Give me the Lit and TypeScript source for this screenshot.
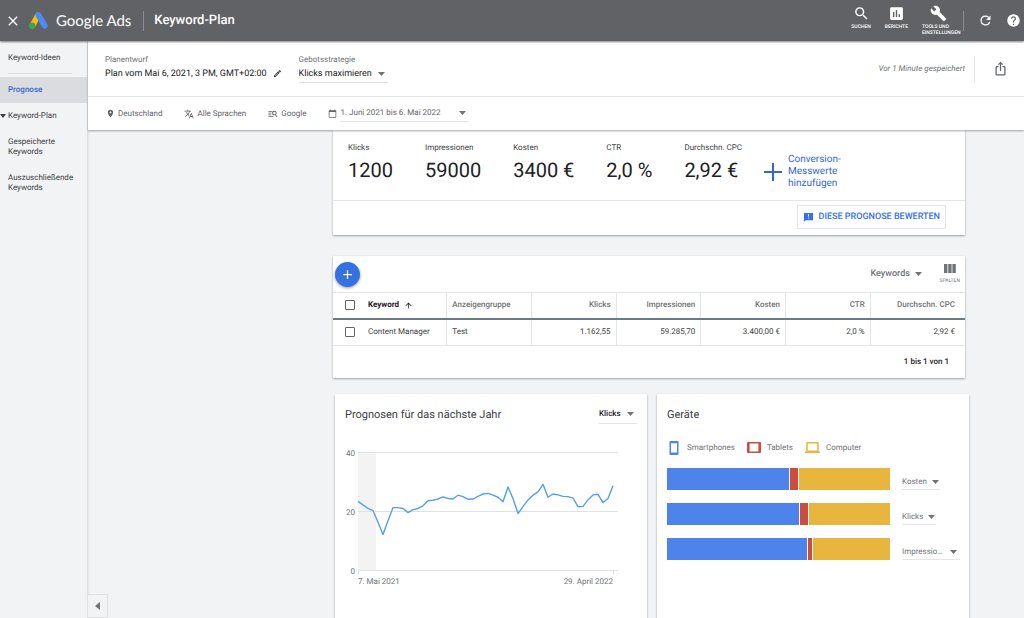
import { LitElement, html, css, svg } from "lit";
import { customElement, property } from "lit/decorators.js";

const shared = css`
  *, *::before, *::after { box-sizing: border-box; }
  button, select, input { font: inherit; color: inherit; margin: 0; text-rendering: inherit; }
  button { background: none; border: 0; padding: 0; cursor: pointer; }
  a { color: inherit; text-decoration: none; }
  svg { display: block; flex: none; }
`;

const icon = (size: number, d: string) => html`
  <svg width=${size} height=${size} viewBox="0 0 24 24" fill="currentColor" aria-hidden="true"><path d=${d}></path></svg>
`;

const paths = {
  close: "M19 6.4L17.6 5 12 10.6 6.4 5 5 6.4 10.6 12 5 17.6 6.4 19 12 13.4 17.6 19 19 17.6 13.4 12z",
  search: "M15.5 14h-.79l-.28-.27A6.47 6.47 0 0 0 16 9.5 6.5 6.5 0 1 0 9.5 16c1.61 0 3.09-.59 4.23-1.57l.27.28v.79l5 4.99L20.49 19l-4.99-5zm-6 0C7.01 14 5 11.99 5 9.5S7.01 5 9.5 5 14 7.01 14 9.5 11.99 14 9.5 14z",
  reports: "M19 3H5a2 2 0 0 0-2 2v14a2 2 0 0 0 2 2h14a2 2 0 0 0 2-2V5a2 2 0 0 0-2-2zM9 17H7v-7h2v7zm4 0h-2V7h2v10zm4 0h-2v-4h2v4z",
  wrench: "M22.700 19l-9.100-9.100c.9-2.300.4-5-1.500-6.900-2-2-5-2.400-7.400-1.300L9 6 6 9 1.600 4.700C.4 7.100.9 10.100 2.900 12.100c1.900 1.900 4.600 2.400 6.900 1.500l9.100 9.100c.4.4 1 .4 1.400 0l2.300-2.300c.5-.4.5-1.100.1-1.400z",
  refresh: "M17.650 6.350A7.958 7.958 0 0 0 12 4a8 8 0 1 0 7.730 10h-2.080A6 6 0 1 1 12 6c1.660 0 3.140.69 4.220 1.780L13 11h7V4l-2.350 2.350z",
  help: "M12 2a10 10 0 1 0 0 20 10 10 0 0 0 0-20zm1 17h-2v-2h2v2zm2.070-7.750l-.9.920C13.450 12.900 13 13.500 13 15h-2v-.5c0-1.100.45-2.100 1.170-2.830l1.240-1.260c.37-.36.59-.86.59-1.410a2 2 0 1 0-4 0H8a4 4 0 1 1 8 0c0 .88-.36 1.680-.93 2.250z",
  pencil: "M14.060 9.020l.92.920L5.920 19H5v-.92l9.060-9.060M17.660 3c-.25 0-.51.100-.7.290l-1.830 1.830 3.750 3.750 1.830-1.830a1 1 0 0 0 0-1.410l-2.340-2.340c-.2-.2-.45-.29-.71-.29zm-3.600 3.190L3 17.250V21h3.750L17.810 9.940l-3.750-3.750z",
  pin: "M12 2a7 7 0 0 0-7 7c0 5.250 7 13 7 13s7-7.750 7-13a7 7 0 0 0-7-7zm0 9.500a2.500 2.500 0 1 1 0-5 2.500 2.500 0 0 1 0 5z",
  translate: "M12.870 15.070l-2.540-2.510.03-.03A17.520 17.520 0 0 0 14.070 6H17V4h-7V2H8v2H1v1.990h11.170C11.500 7.920 10.440 9.750 9 11.350 8.070 10.320 7.300 9.190 6.690 8h-2c.73 1.630 1.730 3.170 2.980 4.560l-5.090 5.020L4 19l5-5 3.110 3.110.76-2.040zM18.500 10h-2L12 22h2l1.120-3h4.750L21 22h2l-4.500-12zm-2.620 7l1.620-4.330L19.120 17h-3.240z",
  network: "M1 5h9v1.800H1zM1 9h7v1.800H1zM1 13h7v1.800H1zM1 17h12v1.800H1zM15.500 4.500a5.200 5.200 0 0 1 3.600 9l4 5.500h-2.500l-3.400-4.500A5.200 5.200 0 1 1 15.500 4.500zm0 2a3.200 3.200 0 1 0 0 6.400 3.200 3.200 0 0 0 0-6.400z",
  calendar: "M20 3h-1V1h-2v2H7V1H5v2H4c-1.100 0-2 .9-2 2v16c0 1.100.9 2 2 2h16c1.100 0 2-.9 2-2V5c0-1.100-.9-2-2-2zm0 18H4V8h16v13z",
  share: "M16 5l-1.420 1.420-1.590-1.590V16h-1.980V4.830L9.420 6.420 8 5l4-4 4 4zm4 5v11a2 2 0 0 1-2 2H6a2 2 0 0 1-2-2V10a2 2 0 0 1 2-2h3v2H6v11h12V10h-3V8h3a2 2 0 0 1 2 2z",
  feedback: "M22 2H2v20l4-4h16V2zm-9 12h-2v-2h2v2zm0-4h-2V5h2v5z",
  arrowUp: "M4 12l1.410 1.410L11 7.830V20h2V7.830l5.580 5.590L20 12l-8-8-8 8z",
  add: "M19 13h-6v6h-2v-6H5v-2h6V5h2v6h6v2z",
};

@customElement("drop-down")
class DropDown extends LitElement {
  @property() label = "";
  @property({ attribute: false }) options: string[] = [];

  static styles = [shared, css`
    :host { display: block; }
    .box { display: flex; align-items: center; position: relative; }
    select {
      appearance: none; width: 100%; min-width: 0; border: 0; border-radius: 0; background: none;
      padding: 0 var(--arrow-space, 14px) 0 0; line-height: inherit; outline: none; cursor: pointer;
      overflow: hidden; text-overflow: ellipsis; white-space: nowrap;
    }
    svg { position: absolute; right: var(--arrow-inset, 3px); pointer-events: none; color: #6f7377; }
  `];

  render() {
    return html`
      <label class="box">
        <select aria-label=${this.label}>${this.options.map(o => html`<option>${o}</option>`)}</select>
        <svg width="7" height="4" viewBox="0 0 7 4" fill="currentColor" aria-hidden="true"><path d="M0 0h7L3.500 4z"></path></svg>
      </label>`;
  }
}

@customElement("forecast-chart")
class ForecastChart extends LitElement {
  static styles = [shared, css`
    :host { display: block; }
    .plot { width: 100%; height: auto; overflow: visible; }
    .tick { font: 8px Roboto, sans-serif; fill: #6f7377; }
    .start { text-anchor: start; }
    .end { text-anchor: end; }
  `];

  private values = [
    23.6, 22.4, 21.2, 20.5, 16.5, 12.4, 17, 21.5, 21.5, 21.2, 19.8, 20.8, 21.2,
    22.1, 23.8, 24, 24.4, 25.1, 24.6, 24.4, 25.7, 25.2, 24.3, 24.4, 25.3, 26.1,
    26.3, 25.7, 25, 23.5, 28.5, 24.6, 19.5, 21.8, 24.1, 25.7, 26.8, 29.4, 25,
    26.1, 25.8, 25.3, 25.2, 24.7, 21.8, 21.9, 24.1, 25.8, 26, 23.2, 24.6, 28.9,
  ];

  render() {
    const y = (v: number) => 126 - v * 2.95;
    const points = this.values.map((v, i) => `${13 + i * 5},${y(v)}`).join(" ");
    return html`
      <svg class="plot" viewBox="0 0 292 145" role="img" aria-label="Klicks pro Woche">
        <rect x="13" y="8" width="18" height="118" fill="#f3f3f3"></rect>
        ${[40, 20, 0].map(v => svg`
          <line x1="13" x2="273" y1=${y(v) - 0.5} y2=${y(v) - 0.5} stroke="#dfe1e3"></line>
          <text class="tick end" x="10" y=${y(v) + 3}>${v}</text>`)}
        <path d="M13.500 126v3M268.500 126v3" stroke="#dfe1e3"></path>
        <polyline points=${points} fill="none" stroke="#549ff5" stroke-width="1.400" stroke-linejoin="round"></polyline>
        <text class="tick start" x="13" y="139">7. Mai 2021</text>
        <text class="tick end" x="268" y="139">29. April 2022</text>
      </svg>`;
  }
}

@customElement("app-root")
class AppRoot extends LitElement {
  static styles = [shared, css`
    :host {
      display: flex; flex-direction: column; height: 100vh; overflow: hidden;
      font: 8px/10px Roboto, sans-serif; color: #3c4043; background: #f1f3f4;
      text-rendering: geometricPrecision;
    }
    .topbar {
      display: flex; align-items: center; height: 41px; flex: none; padding: 0 3px 0 5px;
      color: #fff; background: #606266; box-shadow: 0 1px 2px rgba(0, 0, 0, .5); position: relative; z-index: 3;
    }
    .logo { margin-left: 8px; }
    .brand { font: 15px/20px Lato, sans-serif; margin-left: 8px; }
    .rule { width: 1px; height: 20px; background: #8b8d90; }
    .brand + .rule { margin: 0 10px 0 12px; }
    h1 { font-size: 13px; line-height: 20px; font-weight: 500; margin: 0; }
    .tools { display: flex; align-items: center; margin-left: auto; }
    .tool {
      display: flex; flex-direction: column; align-items: center; align-self: flex-start; gap: 2px;
      margin-right: 14px; font-size: 5px; line-height: 6px; font-weight: 500;
    }
    .tool.wide { width: 32px; margin-right: 9px; }
    .tool.wide span { width: 32px; text-align: left; }
    .refresh { margin: 0 13px 0 14px; }
    .body { display: flex; flex: 1; min-height: 0; }
    .side {
      width: 88px; flex: none; padding-top: 4px; border-right: 1px solid #dcdee0;
      position: relative; box-shadow: 1px 0 2px rgba(0, 0, 0, .06);
    }
    .side a { display: block; padding: 8px 8px; }
    .side hr { border: 0; height: 1px; background: #e0e2e4; margin: 2px 15px 3px 8px; }
    .side a.on { background: #dadce0; color: #3367d6; font-weight: 500; }
    .side a.group { display: flex; align-items: center; gap: 2px; padding-left: 0; }
    .collapse {
      position: absolute; left: 87px; bottom: 0; width: 21px; height: 24px;
      border: 1px solid #dfe1e3; background: #f1f3f4; display: grid; place-items: center; color: #6f7377;
    }
    .content { display: flex; flex-direction: column; flex: 1; min-width: 0; }
    .head { background: #fff; box-shadow: 0 1px 2px rgba(0, 0, 0, .35); position: relative; z-index: 2; flex: none; }
    .plan { display: flex; align-items: center; height: 56px; padding: 0 16px 0 17px; border-bottom: 1px solid #e3e5e7; }
    .field { height: 30px; margin-right: 17px; font-size: 9px; line-height: 14px; color: #202124; }
    .caption { font-size: 8px; line-height: 12px; color: #6f7377; }
    .value { display: flex; align-items: center; gap: 6px; line-height: 16px; }
    .strategy { width: 89px; border-bottom: 1px solid #dfe1e3; line-height: 16px; }
    .saved { margin-left: auto; font-style: italic; color: #6f7377; font-size: 8px; }
    .plan .rule { height: 26px; background: #e3e5e7; margin: 0 18px 0 9px; }
    .share { color: #5f6368; }
    .filters { display: flex; align-items: center; height: 33px; padding: 0 18px; color: #5f6368; font-size: 8px; }
    .filter { display: flex; align-items: center; gap: 3px; margin-right: 22px; }
    .range { width: 129px; border-bottom: 1px solid #e3e5e7; line-height: 16px; }
    main { flex: 1; min-height: 0; overflow: hidden; padding: 0 55px 0 245px; }
    .card { background: #fff; box-shadow: 0 1px 2px rgba(0, 0, 0, .35); }
    .wide-card { margin-right: 4px; margin-bottom: 21px; }
    .kpis { display: flex; gap: 32px; height: 71px; padding: 13px 15px 0; border-bottom: 1px solid #e3e5e7; }
    .kpis dl { display: flex; gap: 32px; margin: 0; }
    .kpis dd { margin: 4px 0 0; font-size: 20px; line-height: 26px; color: #202124; white-space: nowrap; }
    .kpis dt { white-space: nowrap; }
    .add-metric { display: flex; align-items: center; gap: 6px; height: 36px; margin: 11px 0 0 -10px; color: #3367d6; font-size: 10px; line-height: 12px; text-align: left; }
    .rate { display: flex; justify-content: flex-end; padding: 4px 19px 6px; }
    .rate button {
      display: flex; align-items: center; gap: 5px; height: 24px; padding: 0 5px; border: 1px solid #e3e5e7;
      color: #3671e9; font-size: 9px; font-weight: 500;
    }
    .bar { display: flex; align-items: center; height: 36px; padding: 0 5px 0 2px; }
    .fab {
      width: 25px; height: 25px; border-radius: 50%; background: #3671e0; color: #fff;
      display: grid; place-items: center; box-shadow: 0 1px 3px rgba(0, 0, 0, .4);
    }
    .view { width: 54px; margin-left: auto; font-size: 9px; font-weight: 500; color: #6f7377; }
    .columns { display: flex; flex-direction: column; align-items: center; gap: 5px; margin-left: 15px; font-size: 5px; line-height: 6px; color: #6f7377; }
    table { width: 100%; border-collapse: collapse; table-layout: fixed; }
    .first { width: 18%; }
    .last { width: 15%; }
    th, td { height: 27px; padding: 0 5px; text-align: right; border: 0 solid #e3e5e7; border-width: 1px 0 1px 1px; font-weight: 400; white-space: nowrap; }
    th { height: 26px; font-weight: 500; color: #6f7377; border-bottom: 2px solid #6c7a83; }
    th:nth-child(-n+2), td:nth-child(-n+2) { text-align: left; }
    th:first-child, td:first-child { padding-left: 12px; border-left: 0; }
    th:first-child { color: #202124; font-weight: 700; }
    th:last-child, td:last-child { padding-right: 10px; }
    .key { display: flex; align-items: center; gap: 5px; }
    .key input { appearance: none; width: 10px; height: 10px; border: 1px solid #5f6368; border-radius: 1px; margin-right: 8px; background: #fff; flex: none; }
    .pager { padding: 11px 16px; text-align: right; font-weight: 500; color: #202124; margin: 0; }
    .pair { display: grid; grid-template-columns: 1fr 1fr; gap: 10px; margin-left: 2px; height: 300px; margin-top: -5px; }
    .panel { padding: 10px; }
    .title { display: flex; align-items: center; height: 21px; }
    h2 { font-size: 11px; line-height: 20px; font-weight: 400; margin: 0; color: #3c4043; white-space: nowrap; }
    .metric { width: 38px; margin-left: auto; border-bottom: 1px solid #e3e5e7; line-height: 18px; font-weight: 500; color: #202124; }
    forecast-chart { margin-top: 20px; }
    .legend { display: flex; gap: 12px; list-style: none; margin: 16px 0 13px; padding: 0; color: #6f7377; }
    .legend li { display: flex; align-items: center; gap: 6px; height: 14px; }
    .device { display: flex; align-items: flex-end; gap: 12px; height: 22px; margin-bottom: 13px; }
    .stack { display: flex; flex: 1; height: 22px; gap: 1px; }
    .s0 { background: #4f83ec; }
    .s1 { background: #cb4c40; }
    .s2 { background: #e8b53e; flex: 1; }
    .by { width: 57px; color: #6f7377; line-height: 14px; }
    .by drop-down { border-bottom: 1px solid #e3e5e7; }
    .w0, .w1 { --arrow-space: 8px; --arrow-inset: 1px; }
    .w0 { width: 38px; }
    .w1 { width: 34px; }
    .w2 { width: 58px; }
  `];

  private kpis = [["Klicks", "1200"], ["Impressionen", "59000"], ["Kosten", "3400 €"], ["CTR", "2,0 %"], ["Durchschn. CPC", "2,92 €"]];
  private heads = ["Anzeigengruppe", "Klicks", "Impressionen", "Kosten", "CTR", "Durchschn. CPC"];
  private row = ["Test", "1.162,55", "59.285,70", "3.400,00 €", "2,0 %", "2,92 €"];
  private devices = [
    { by: "Kosten", smartphone: 54.5, tablet: 3.6 },
    { by: "Klicks", smartphone: 59.4, tablet: 3.6 },
    { by: "Impressionen", smartphone: 62.6, tablet: 2 },
  ];

  render() {
    return html`
      <header class="topbar">
        <button aria-label="Schließen">${icon(16, paths.close)}</button>
        <svg class="logo" width="19" height="17" viewBox="0 0 19 17" aria-hidden="true">
          <path d="M9 3.500L3.500 13.500" stroke="#fbbc04" stroke-width="5.800" stroke-linecap="round"></path>
          <path d="M9.500 3.200L15.600 13.600" stroke="#4c8bf5" stroke-width="6" stroke-linecap="round"></path>
          <circle cx="3.200" cy="13.700" r="3.100" fill="#34a853"></circle>
        </svg>
        <span class="brand">Google Ads</span>
        <span class="rule"></span>
        <h1>Keyword-Plan</h1>
        <div class="tools">
          <button class="tool">${icon(17, paths.search)}SUCHEN</button>
          <button class="tool">${icon(17, paths.reports)}BERICHTE</button>
          <button class="tool wide">${icon(17, paths.wrench)}<span>TOOLS UND EINSTELLUNGEN</span></button>
          <span class="rule"></span>
          <button class="refresh" aria-label="Aktualisieren">${icon(15, paths.refresh)}</button>
          <button aria-label="Hilfe">${icon(15, paths.help)}</button>
        </div>
      </header>
      <div class="body">
        <nav class="side">
          <a href="#ideen">Keyword-Ideen</a>
          <hr>
          <a class="on" href="#prognose">Prognose</a>
          <a class="group" href="#plan">
            <svg width="6" height="4" viewBox="0 0 6 4" fill="currentColor" aria-hidden="true"><path d="M0 0h6L3 4z"></path></svg>Keyword-Plan</a>
          <a href="#gespeichert">Gespeicherte Keywords</a>
          <a href="#ausschluss">Auszuschließende Keywords</a>
          <button class="collapse" aria-label="Menü einklappen">
            <svg width="5" height="8" viewBox="0 0 5 8" fill="currentColor" aria-hidden="true"><path d="M5 0v8L0 4z"></path></svg>
          </button>
        </nav>
        <div class="content">
          <div class="head">
            <div class="plan">
              <div class="field">
                <div class="caption">Planentwurf</div>
                <div class="value">Plan vom Mai 6, 2021, 3 PM, GMT+02:00
                  <button aria-label="Plan umbenennen">${icon(9, paths.pencil)}</button></div>
              </div>
              <div class="field">
                <div class="caption">Gebotsstrategie</div>
                <drop-down class="strategy" label="Gebotsstrategie" .options=${["Klicks maximieren"]}></drop-down>
              </div>
              <span class="saved">Vor 1 Minute gespeichert</span>
              <span class="rule"></span>
              <button class="share" aria-label="Teilen">${icon(15, paths.share)}</button>
            </div>
            <div class="filters">
              <button class="filter">${icon(9, paths.pin)}Deutschland</button>
              <button class="filter">${icon(10, paths.translate)}Alle Sprachen</button>
              <button class="filter">${icon(10, paths.network)}Google</button>
              <div class="filter">${icon(9, paths.calendar)}
                <drop-down class="range" label="Zeitraum" .options=${["1. Juni 2021 bis 6. Mai 2022"]}></drop-down></div>
            </div>
          </div>
          <main>
            <section class="card wide-card">
              <div class="kpis">
                <dl>${this.kpis.map(([k, v]) => html`<div><dt>${k}</dt><dd>${v}</dd></div>`)}</dl>
                <button class="add-metric">
                  <svg width="18" height="18" viewBox="0 0 18 18" aria-hidden="true"><path d="M9 0v18M0 9h18" stroke="currentColor" stroke-width="2"></path></svg>
                  <span>Conversion-<br>Messwerte<br>hinzufügen</span>
                </button>
              </div>
              <div class="rate"><button>${icon(11, paths.feedback)}DIESE PROGNOSE BEWERTEN</button></div>
            </section>
            <section class="card wide-card">
              <div class="bar">
                <button class="fab" aria-label="Keyword hinzufügen">${icon(15, paths.add)}</button>
                <drop-down class="view" label="Ansicht" .options=${["Keywords"]}></drop-down>
                <button class="columns">
                  <svg width="12" height="9" viewBox="0 0 12 9" fill="currentColor" aria-hidden="true"><path d="M0 0h3.400v9H0zM4.200 0h3.400v9H4.200zM8.400 0h3.400v9H8.400z"></path></svg>SPALTEN</button>
              </div>
              <table>
                <colgroup><col class="first"><col><col><col><col><col><col class="last"></colgroup>
                <thead><tr>
                  <th><div class="key"><input type="checkbox" aria-label="Alle auswählen">Keyword ${icon(9, paths.arrowUp)}</div></th>
                  ${this.heads.map(h => html`<th>${h}</th>`)}
                </tr></thead>
                <tbody><tr>
                  <td><label class="key"><input type="checkbox">Content Manager</label></td>
                  ${this.row.map(c => html`<td>${c}</td>`)}
                </tr></tbody>
              </table>
              <p class="pager">1 bis 1 von 1</p>
            </section>
            <div class="pair">
              <section class="card panel">
                <div class="title">
                  <h2>Prognosen für das nächste Jahr</h2>
                  <drop-down class="metric" label="Messwert" .options=${["Klicks"]}></drop-down>
                </div>
                <forecast-chart></forecast-chart>
              </section>
              <section class="card panel">
                <div class="title"><h2>Geräte</h2></div>
                <ul class="legend">
                  <li><svg width="14" height="14" viewBox="0 0 14 14" aria-hidden="true"><path fill="#4f83ec" fill-rule="evenodd" d="M3.500 0h7q1 0 1 1v12q0 1-1 1h-7q-1 0-1-1V1q0-1 1-1zM4 2.300v9.200h6V2.300z"></path></svg>Smartphones</li>
                  <li><svg width="14" height="12" viewBox="0 0 14 12" aria-hidden="true"><path fill="#cb4c40" fill-rule="evenodd" d="M1 0h12q1 0 1 1v9q0 1-1 1H1q-1 0-1-1V1q0-1 1-1zM2.600 1.500v8h8.800v-8z"></path></svg>Tablets</li>
                  <li><svg width="15" height="12" viewBox="0 0 15 12" aria-hidden="true"><path fill="#e8b53e" fill-rule="evenodd" d="M2.300 0h10.400q1 0 1 1v8.500H15V11H0V9.500h1.300V1q0-1 1-1zM2.800 1.500v7h9.400v-7z"></path></svg>Computer</li>
                </ul>
                ${this.devices.map((d, i) => html`
                  <div class="device">
                    <div class="stack">
                      <div class="s0" style="width:${d.smartphone}%"></div>
                      <div class="s1" style="width:${d.tablet}%"></div>
                      <div class="s2"></div>
                    </div>
                    <div class="by"><drop-down class="w${i}" label="Messwert ${i + 1}" .options=${[d.by]}></drop-down></div>
                  </div>`)}
              </section>
            </div>
          </main>
        </div>
      </div>`;
  }
}
